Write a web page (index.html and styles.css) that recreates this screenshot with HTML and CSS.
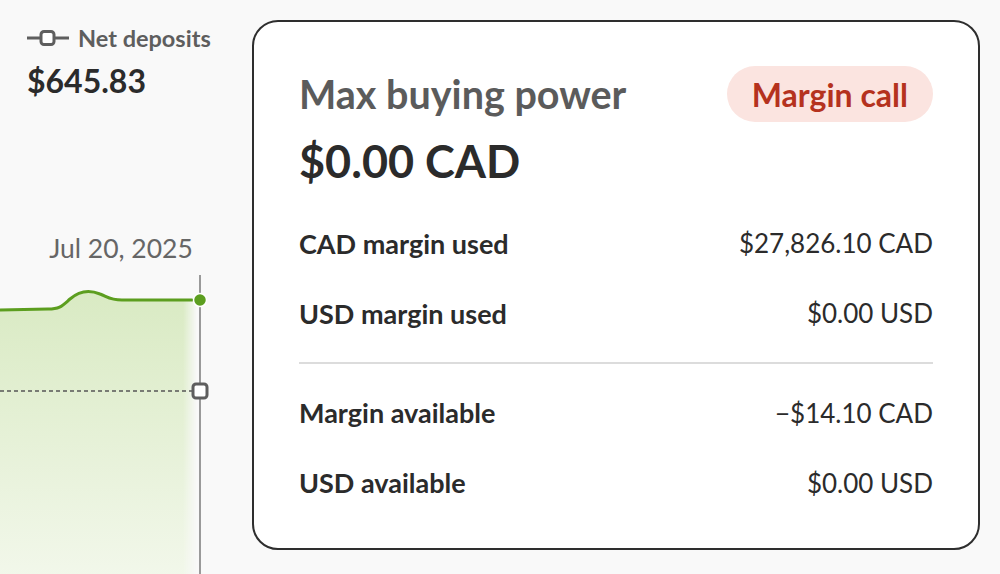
FILE: index.html
```html
<!DOCTYPE html>
<html lang="en">
<head>
<meta charset="utf-8">
<title>Max buying power</title>
<link rel="stylesheet" href="styles.css">
</head>
<body>
<div class="page">
  <section class="chart">
    <div class="legend">
      <svg class="legend-icon" width="42" height="18" viewBox="0 0 42 18" aria-hidden="true">
        <line x1="0" y1="9" x2="42" y2="9" stroke="#5e5e5e" stroke-width="3"/>
        <rect x="14" y="2.5" width="13" height="13" rx="3" fill="#fff" stroke="#5e5e5e" stroke-width="3"/>
      </svg>
      <span class="legend-label">Net deposits</span>
    </div>
    <div class="legend-value">$645.83</div>
    <div class="date">Jul 20, 2025</div>
    <svg class="plot" width="252" height="320" viewBox="0 0 252 320" aria-hidden="true">
      <defs>
        <linearGradient id="fillv" x1="0" y1="0" x2="0" y2="1">
          <stop offset="0" stop-color="#d9eac3"/>
          <stop offset="1" stop-color="#f3f8ec"/>
        </linearGradient>
        <linearGradient id="fadeh" x1="0" y1="0" x2="1" y2="0">
          <stop offset="0.93" stop-color="#fff" stop-opacity="1"/>
          <stop offset="1" stop-color="#fff" stop-opacity="0"/>
        </linearGradient>
        <mask id="fmask">
          <rect x="0" y="0" width="197" height="320" fill="url(#fadeh)"/>
        </mask>
      </defs>
      <path d="M0 41 L48 40 C60 40 62 37 70 30 C78 23 88 20 100 25 C108 28 110 31 122 31 L197 31 L197 320 L0 320 Z" fill="url(#fillv)" mask="url(#fmask)"/>
      <line x1="0" y1="122" x2="192" y2="122" stroke="#555" stroke-width="1.3" stroke-dasharray="4 3"/>
      <path d="M0 41 L48 40 C60 40 62 37 70 30 C78 23 88 20 100 25 C108 28 110 31 122 31 L192 31" fill="none" stroke="#5c9e1f" stroke-width="3" stroke-linecap="round"/>
      <line x1="200" y1="6" x2="200" y2="320" stroke="#7a7a7a" stroke-width="1.5"/>
      <circle cx="200" cy="31" r="6.5" fill="#5c9e1f" stroke="#fff" stroke-width="1.5"/>
      <rect x="193" y="115" width="14" height="14" rx="3" fill="#fff" stroke="#5e5e5e" stroke-width="3"/>
    </svg>
  </section>

  <section class="card">
    <header class="card-head">
      <h1 class="card-title">Max buying power</h1>
      <span class="badge">Margin call</span>
    </header>
    <div class="card-amount">$0.00 CAD</div>
    <div class="rows">
      <div class="row"><span class="row-label">CAD margin used</span><span class="row-value">$27,826.10 CAD</span></div>
      <div class="row"><span class="row-label">USD margin used</span><span class="row-value">$0.00 USD</span></div>
      <div class="divider"></div>
      <div class="row"><span class="row-label">Margin available</span><span class="row-value">&minus;$14.10 CAD</span></div>
      <div class="row"><span class="row-label">USD available</span><span class="row-value">$0.00 USD</span></div>
    </div>
  </section>
</div>
</body>
</html>
```

FILE: styles.css
```css
* { box-sizing: border-box; }

html, body {
  margin: 0;
  padding: 0;
  background: #f9f9f9;
  font-family: "Lato", "Liberation Sans", sans-serif;
  color: #2b2b2b;
}

.page {
  display: flex;
  align-items: flex-start;
  width: 1000px;
  height: 574px;
  overflow: hidden;
}

.chart {
  width: 252px;
  flex: 0 0 252px;
  display: flex;
  flex-direction: column;
}

.legend {
  display: flex;
  align-items: center;
  gap: 9px;
  padding-left: 27px;
  margin-top: 25px;
  height: 26px;
}

.legend-icon { display: block; }

.legend-label {
  font-size: 23.5px;
  font-weight: 700;
  color: #5e5e5e;
  line-height: 26px;
}

.legend-value {
  padding-left: 27px;
  margin-top: 10px;
  font-size: 32px;
  font-weight: 700;
  line-height: 40px;
  color: #2b2b2b;
}

.date {
  margin-top: 131px;
  width: 242px;
  text-align: center;
  font-size: 26.5px;
  line-height: 32px;
  color: #666;
}

.plot {
  display: block;
  margin-top: 5px;
}

.card {
  margin-top: 20px;
  width: 728px;
  height: 530px;
  background: #fff;
  border: 2.5px solid #2e2e2e;
  border-radius: 26px;
  padding: 44px 45px 0 45px;
}

.card-head {
  display: flex;
  justify-content: space-between;
  align-items: center;
  height: 56px;
}

.card-title {
  margin: 0;
  font-size: 39.5px;
  font-weight: 700;
  color: #5b5b5b;
  line-height: 46px;
}

.badge {
  display: inline-flex;
  align-items: center;
  height: 56px;
  padding: 0 25px;
  border-radius: 28px;
  background: #fbe4e0;
  color: #b5321e;
  font-size: 32px;
  font-weight: 700;
}

.card-amount {
  margin-top: 14px;
  font-size: 45px;
  font-weight: 700;
  line-height: 50px;
  color: #2b2b2b;
}

.rows {
  margin-top: 22px;
  display: flex;
  flex-direction: column;
}

.row {
  display: flex;
  justify-content: space-between;
  align-items: center;
  height: 70px;
}

.row-label {
  font-size: 27px;
  font-weight: 700;
  color: #2b2b2b;
}

.row-value {
  font-size: 26px;
  font-weight: 400;
  color: #2b2b2b;
}

.divider {
  height: 1.5px;
  background: #dcdcdc;
  margin: 14px 0 14px;
}
```
